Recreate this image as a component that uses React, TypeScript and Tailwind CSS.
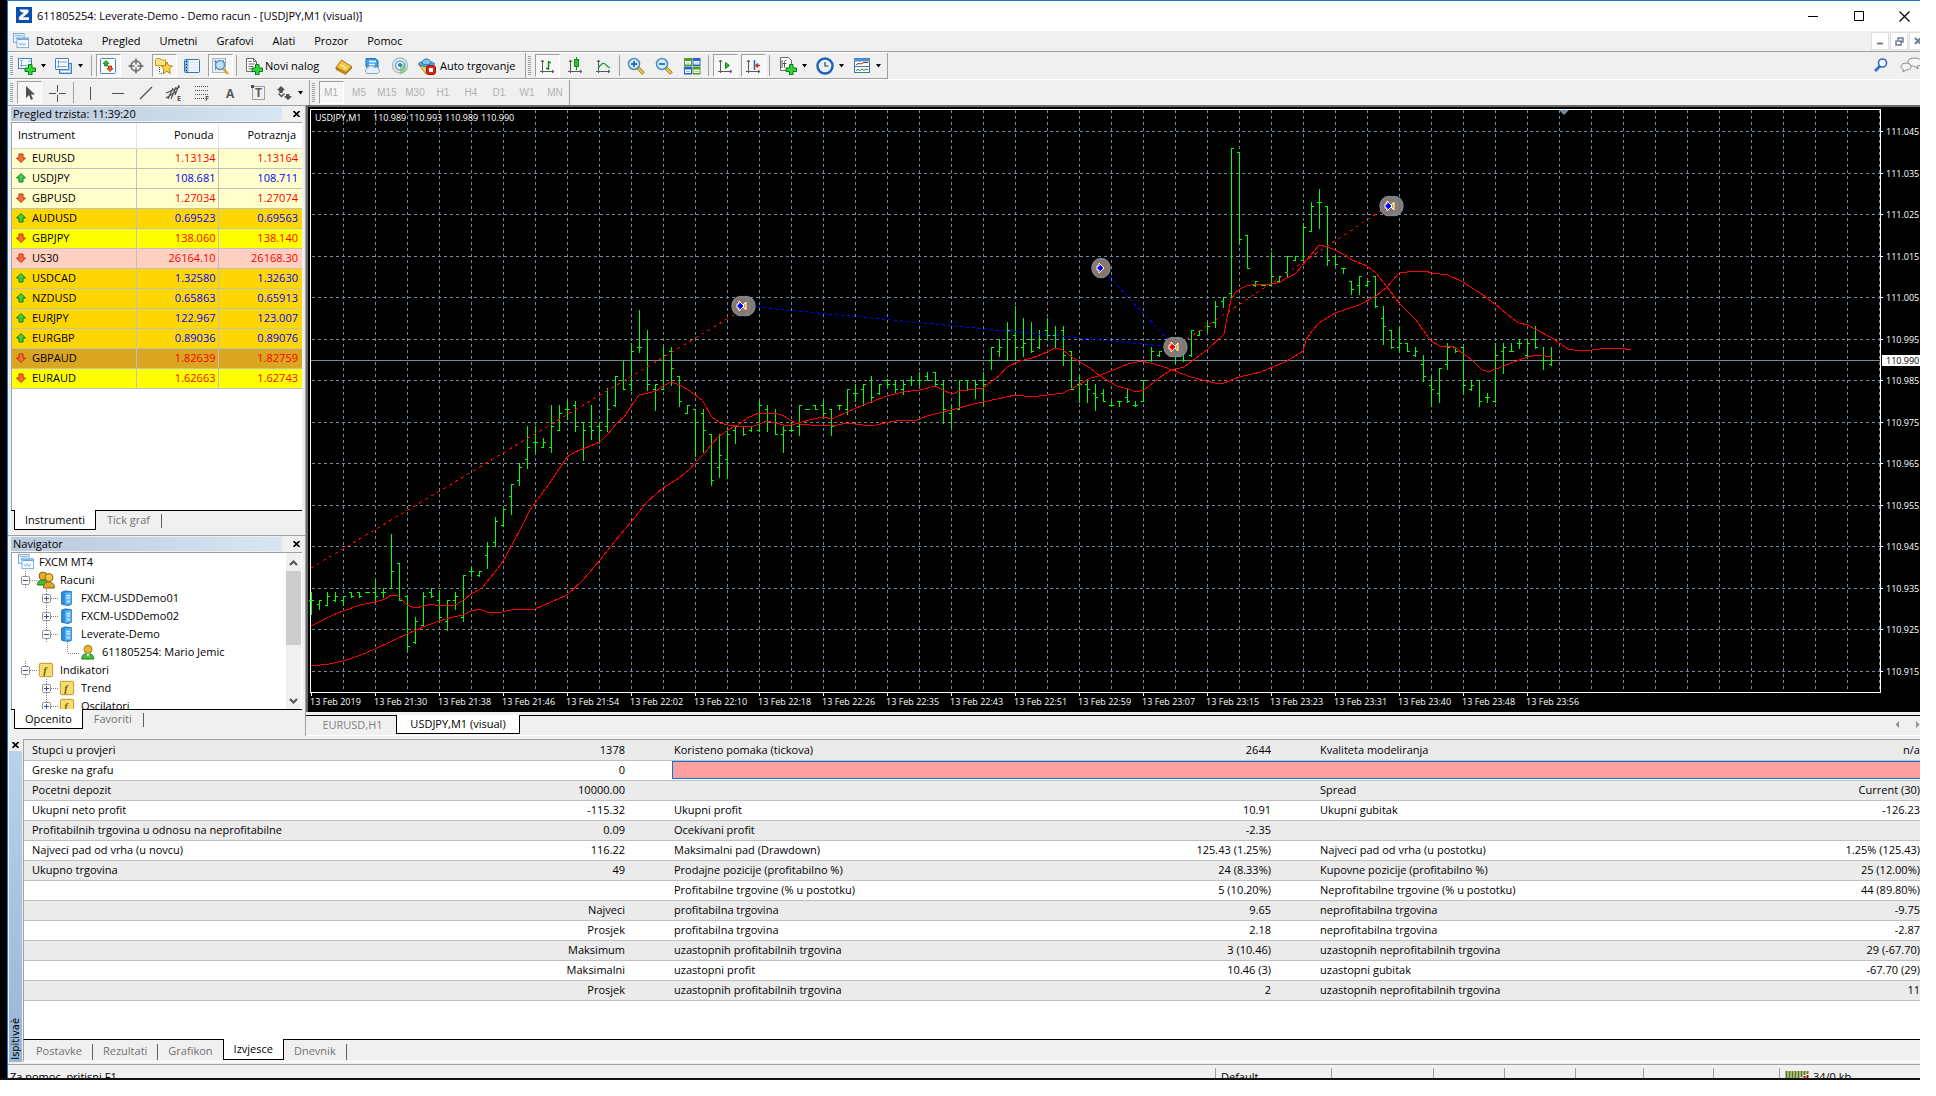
import type { ReactNode } from 'react'

// ---------- data ----------

const menuItems = ['Datoteka', 'Pregled', 'Umetni', 'Grafovi', 'Alati', 'Prozor', 'Pomoc']
const timeframes = ['M1', 'M5', 'M15', 'M30', 'H1', 'H4', 'D1', 'W1', 'MN']

type Quote = { name: string; bid: string; ask: string; up: boolean; bg: string }

const quotes: Quote[] = [
  { name: 'EURUSD', bid: '1.13134', ask: '1.13164', up: false, bg: 'bg-[#ffffcc]' },
  { name: 'USDJPY', bid: '108.681', ask: '108.711', up: true, bg: 'bg-[#ffffcc]' },
  { name: 'GBPUSD', bid: '1.27034', ask: '1.27074', up: false, bg: 'bg-[#ffffcc]' },
  { name: 'AUDUSD', bid: '0.69523', ask: '0.69563', up: true, bg: 'bg-[#ffd700]' },
  { name: 'GBPJPY', bid: '138.060', ask: '138.140', up: false, bg: 'bg-[#ffff00]' },
  { name: 'US30', bid: '26164.10', ask: '26168.30', up: false, bg: 'bg-[#ffcfc0]' },
  { name: 'USDCAD', bid: '1.32580', ask: '1.32630', up: true, bg: 'bg-[#ffd700]' },
  { name: 'NZDUSD', bid: '0.65863', ask: '0.65913', up: true, bg: 'bg-[#ffd700]' },
  { name: 'EURJPY', bid: '122.967', ask: '123.007', up: true, bg: 'bg-[#ffd700]' },
  { name: 'EURGBP', bid: '0.89036', ask: '0.89076', up: true, bg: 'bg-[#ffd700]' },
  { name: 'GBPAUD', bid: '1.82639', ask: '1.82759', up: false, bg: 'bg-[#daa520]' },
  { name: 'EURAUD', bid: '1.62663', ask: '1.62743', up: false, bg: 'bg-[#ffff00]' },
]

const report = [
  ['Stupci u provjeri', '1378', 'Koristeno pomaka (tickova)', '2644', 'Kvaliteta modeliranja', 'n/a'],
  ['Greske na grafu', '0'],
  ['Pocetni depozit', '10000.00', '', '', 'Spread', 'Current (30)'],
  ['Ukupni neto profit', '-115.32', 'Ukupni profit', '10.91', 'Ukupni gubitak', '-126.23'],
  ['Profitabilnih trgovina u odnosu na neprofitabilne', '0.09', 'Ocekivani profit', '-2.35', '', ''],
  ['Najveci pad od vrha (u novcu)', '116.22', 'Maksimalni pad (Drawdown)', '125.43 (1.25%)', 'Najveci pad od vrha (u postotku)', '1.25% (125.43)'],
  ['Ukupno trgovina', '49', 'Prodajne pozicije (profitabilno %)', '24 (8.33%)', 'Kupovne pozicije (profitabilno %)', '25 (12.00%)'],
  ['', '', 'Profitabilne trgovine (% u postotku)', '5 (10.20%)', 'Neprofitabilne trgovine (% u postotku)', '44 (89.80%)'],
  ['', 'Najveci', 'profitabilna trgovina', '9.65', 'neprofitabilna trgovina', '-9.75'],
  ['', 'Prosjek', 'profitabilna trgovina', '2.18', 'neprofitabilna trgovina', '-2.87'],
  ['', 'Maksimum', 'uzastopnih profitabilnih trgovina', '3 (10.46)', 'uzastopnih neprofitabilnih trgovina', '29 (-67.70)'],
  ['', 'Maksimalni', 'uzastopni profit', '10.46 (3)', 'uzastopni gubitak', '-67.70 (29)'],
  ['', 'Prosjek', 'uzastopnih profitabilnih trgovina', '2', 'uzastopnih neprofitabilnih trgovina', '11'],
]

// high, low, open, close in chart units, one bar every 8 units
const bars: [number, number, number, number][] = [
  [592, 614, 600, 600], [600, 609, 604, 600], [592, 605, 605, 596], [592, 601, 600, 596], [596, 605, 600, 596],
  [592, 597, 592, 596], [592, 597, 592, 596], [592, 592, 592, 592], [579, 601, 592, 596], [588, 597, 592, 592],
  [534, 588, 588, 571], [563, 600, 563, 600], [595, 651, 596, 646], [617, 643, 642, 621], [592, 625, 625, 596],
  [588, 597, 592, 596], [590, 621, 600, 617], [600, 630, 621, 600], [592, 609, 600, 596], [576, 621, 617, 575],
  [567, 576, 571, 571], [571, 576, 575, 571], [542, 568, 555, 546], [517, 546, 542, 521], [509, 526, 525, 509],
  [484, 514, 496, 484], [463, 485, 480, 467], [426, 468, 459, 447], [426, 452, 442, 442], [438, 447, 447, 442],
  [405, 452, 447, 426], [405, 430, 430, 413], [401, 419, 409, 409], [401, 431, 405, 426], [422, 460, 422, 430],
  [405, 439, 426, 430], [422, 443, 426, 430], [388, 431, 426, 409], [376, 406, 405, 376], [360, 389, 380, 389],
  [343, 390, 384, 351], [310, 352, 347, 347], [330, 390, 339, 384], [384, 410, 389, 384], [347, 389, 389, 355],
  [347, 385, 351, 368], [376, 406, 376, 401], [405, 413, 413, 405], [409, 456, 409, 422], [409, 452, 413, 430],
  [434, 485, 434, 480], [434, 477, 467, 455], [427, 478, 459, 434], [426, 443, 430, 426], [426, 435, 426, 434],
  [426, 431, 430, 426], [401, 431, 430, 405], [405, 431, 409, 413], [409, 434, 413, 434], [426, 452, 434, 430],
  [422, 431, 430, 430], [405, 435, 426, 405], [409, 409, 409, 409], [405, 409, 405, 409], [401, 418, 405, 413],
  [409, 435, 409, 426], [405, 409, 405, 405], [389, 414, 409, 389], [384, 401, 393, 393], [384, 405, 389, 384],
  [376, 402, 380, 397], [384, 394, 393, 384], [379, 387, 380, 384], [380, 393, 384, 389], [380, 394, 389, 384],
  [376, 385, 380, 380], [372, 385, 380, 380], [372, 380, 376, 380], [372, 385, 372, 384], [380, 423, 384, 409],
  [405, 427, 413, 409], [380, 409, 409, 380], [380, 389, 380, 389], [380, 398, 389, 384], [372, 405, 380, 384],
  [347, 369, 360, 347], [339, 356, 351, 347], [322, 360, 360, 330], [306, 360, 335, 347], [318, 356, 347, 343],
  [322, 352, 339, 351], [330, 348, 347, 339], [318, 339, 330, 335], [326, 348, 335, 335], [326, 365, 330, 355],
  [351, 389, 351, 389], [375, 402, 384, 384], [379, 402, 384, 389], [384, 410, 393, 397], [389, 401, 393, 401],
  [401, 406, 405, 405], [401, 406, 401, 401], [389, 402, 397, 401], [401, 406, 405, 405], [380, 401, 401, 380],
  [347, 361, 360, 351], [351, 356, 355, 351], [343, 352, 347, 351], [347, 363, 347, 351], [347, 361, 347, 360],
  [330, 356, 355, 330], [330, 335, 335, 330], [322, 331, 326, 326], [301, 327, 322, 306], [297, 307, 301, 297],
  [148, 298, 293, 148], [152, 244, 152, 239], [235, 268, 235, 268], [281, 286, 285, 281], [285, 285, 285, 285],
  [252, 285, 285, 276], [276, 282, 281, 276], [256, 277, 272, 256], [256, 260, 260, 256], [223, 260, 260, 227],
  [202, 231, 231, 206], [189, 228, 202, 202], [206, 265, 206, 260], [256, 265, 256, 264], [268, 273, 268, 268],
  [281, 294, 281, 289], [276, 294, 285, 276], [281, 286, 285, 281], [276, 307, 276, 306], [306, 344, 318, 326],
  [330, 348, 330, 347], [326, 352, 347, 343], [343, 351, 343, 351], [347, 356, 355, 351], [355, 381, 364, 376],
  [376, 406, 385, 389], [368, 402, 393, 368], [343, 369, 364, 347], [347, 352, 347, 351], [347, 394, 347, 385],
  [380, 390, 389, 385], [380, 406, 380, 401], [393, 402, 397, 397], [343, 402, 401, 355], [343, 373, 351, 347],
  [343, 351, 351, 351], [339, 348, 343, 343], [339, 356, 355, 343], [326, 348, 339, 347], [347, 369, 360, 360],
  [347, 365, 364, 360],
]

const fastMa =
  '311,626 323,620 333,615 343,611 360,605 375,602 385,599 391,595 398,596 402,600 407,605 415,608 424,606 431,604 439,606 455,605 465,599 471,594 482,588 495,572 503,561 512,545 522,526 530,510 535,503 551,481 567,457 575,452 590,446 600,442 607,435 617,423 624,417 632,405 639,395 648,393 656,391 663,386 671,382 680,385 690,391 703,401 711,416 720,423 728,425 737,426 752,427 759,424 767,421 780,424 788,426 798,423 813,419 823,417 832,419 847,412 863,405 871,402 887,396 903,392 920,390 935,386 943,390 952,394 960,391 983,388 991,382 999,376 1007,367 1020,361 1032,358 1047,352 1055,348 1063,350 1073,358 1080,362 1090,368 1100,376 1117,386 1128,389 1136,392 1144,390 1159,378 1171,370 1184,367 1192,361 1207,350 1224,334 1227,318 1231,300 1235,293 1240,289 1246,286 1256,284 1271,284 1280,282 1296,273 1306,261 1319,245 1328,247 1335,250 1345,255 1352,260 1367,266 1376,273 1387,287 1399,303 1416,320 1431,341 1440,346 1454,347 1471,359 1481,369 1488,372 1504,366 1511,363 1528,357 1537,355 1552,357'
const slowMa =
  '311,666 329,664 343,661 361,655 375,649 392,641 407,634 423,627 439,621 453,617 463,615 471,611 480,609 487,612 497,613 511,610 535,609 551,602 567,595 583,580 600,560 615,541 631,522 647,502 663,488 679,478 690,469 695,463 704,454 711,445 719,436 733,427 738,425 747,418 759,413 775,413 784,416 795,423 800,424 810,425 832,426 847,423 871,426 890,422 903,420 915,421 927,416 943,412 959,408 973,404 983,402 997,399 1015,395 1032,397 1047,395 1063,393 1079,385 1088,379 1098,376 1111,371 1128,364 1141,361 1150,363 1161,366 1175,371 1191,377 1206,381 1215,383 1224,383 1239,377 1261,372 1287,361 1303,351 1306,340 1312,331 1319,323 1335,313 1359,305 1376,296 1387,287 1399,273 1415,271 1426,271 1431,273 1448,275 1463,282 1483,295 1495,304 1513,319 1519,323 1528,325 1535,329 1552,338 1568,349 1574,350 1592,350 1609,348 1620,348 1631,350'

const gridRows = [131, 173, 214, 256, 297, 339, 380, 422, 463, 505, 546, 588, 629, 671]
const prices = ['111.045', '111.035', '111.025', '111.015', '111.005', '110.995', '110.985', '110.975', '110.965', '110.955', '110.945', '110.935', '110.925', '110.915']
const times = ['2019', '21:30', '21:38', '21:46', '21:54', '22:02', '22:10', '22:18', '22:26', '22:35', '22:43', '22:51', '22:59', '23:07', '23:15', '23:23', '23:31', '23:40', '23:48', '23:56']

// ---------- icons ----------

function Icon({ children, size = 18 }: { children: ReactNode; size?: number }) {
  return (
    <svg width={size} height={size} viewBox="0 0 18 18" fill="none" className="shrink-0" aria-hidden="true">
      {children}
    </svg>
  )
}

const plus = <path d="M10.500 7.500h3.500v3.500h3.500v3.500h-3.500v3.500h-3.500v-3.500h-3.500v-3.500h3.500z" fill="#2fd636" stroke="#0b7a14" />

const NewChartIcon = () => (
  <Icon>
    <rect x="0.500" y="1.500" width="13" height="10" fill="#f4f9ff" stroke="#3f7fbd" />
    <path d="M3.500 3v7M2 8.500h10M2.500 4l1-1 1 1M10 4h3" stroke="#7fa9d0" />
    {plus}
  </Icon>
)
const ProfilesIcon = () => (
  <Icon>
    <rect x="4.500" y="6.500" width="12" height="10" fill="#a9cbee" stroke="#3f7fbd" />
    <path d="M6 14.500h9" stroke="#fff" />
    <rect x="0.500" y="1.500" width="13" height="11" rx="0.500" fill="#f4f9ff" stroke="#3f7fbd" />
    <path d="M3.500 3v8M2 5h10M2 9.500h10" stroke="#7fa9d0" />
  </Icon>
)
const MarketIcon = () => (
  <Icon>
    <rect x="1.500" y="1.500" width="15" height="15" rx="1" fill="#fff" stroke="#4a86c5" />
    <path d="M7 3.500l3 3H8.500v2.500h-3V6.500H4z" fill="#2fb62f" stroke="#0d7d12" strokeWidth="0.800" />
    <path d="M11 14.500L8 11.500h1.500V9h3v2.500H14z" fill="#f0592a" stroke="#a32a0b" strokeWidth="0.800" />
  </Icon>
)
const CrosshairIcon = () => (
  <Icon>
    <circle cx="9" cy="9" r="5" stroke="#6a6a6a" strokeWidth="1.500" />
    <path d="M9 1.500v6M9 10.500v6M1.500 9h6M10.500 9h6" stroke="#6a6a6a" strokeWidth="1.500" />
  </Icon>
)
const FavoritesIcon = () => (
  <Icon>
    <path d="M0.500 8.500v-6l1-1h4l1 1.500h4v5.500z" fill="#fbe58a" stroke="#c99a22" />
    <path d="M4.500 10v6.500M6 16.500h3" stroke="#444" strokeDasharray="1 1" />
    <path d="M12 5l1.500 3.500 4 0.500-3 3 0.800 4.500-3.500-2.200-3.600 2.200 0.800-4.500-3-3 4.500-0.500z" fill="#ffd24a" stroke="#b9801b" />
  </Icon>
)
const TerminalIcon = () => (
  <Icon>
    <rect x="1.500" y="2.500" width="15" height="13" rx="1" fill="#f2f8fe" stroke="#2e74b5" />
    <rect x="2" y="3" width="3.500" height="12" fill="#7fb4e6" />
    <path d="M3.500 4v10" stroke="#111" strokeDasharray="1 2" />
    <path d="M7 5.500h8M7 8h8M7 10.500h8M7 13h8" stroke="#d5e4f2" />
  </Icon>
)
const TesterIcon = () => (
  <Icon>
    <rect x="1.500" y="1.500" width="13" height="14" fill="#eef2f6" stroke="#a9b4c0" />
    <path d="M4.500 3v10M12.500 3v10M3 4.500h3M11 5.500h3" stroke="#7b8fa4" />
    <circle cx="9" cy="8" r="4.500" fill="#bfe0f7" stroke="#5c94c8" strokeWidth="1.500" />
    <path d="M12.500 12l4.500 5" stroke="#d9a520" strokeWidth="2.500" />
  </Icon>
)
const OrderIcon = () => (
  <Icon>
    <path d="M1.500 1.500h7l3 3v10h-10z" fill="#fff" stroke="#6b6b6b" />
    <path d="M8.500 1.500v3h3M3.500 4.500h3M3.500 7h6M3.500 9.500h5M3.500 12h3" stroke="#6b6b6b" />
    {plus}
  </Icon>
)
const EditorIcon = () => (
  <Icon>
    <path d="M1 10.500L6.500 3l10 6.500L11 16z" fill="#f3c443" stroke="#a8741a" />
    <path d="M1 10.500v2l9.500 5 6-6v-2L11 15.500z" fill="#c98d1e" stroke="#8f5f10" strokeWidth="0.600" />
    <path d="M5.500 7.500l6 4" stroke="#fff1b8" strokeWidth="1.500" />
  </Icon>
)
const CloudServerIcon = () => (
  <Icon>
    <path d="M3 1.500h9l3 2v8H5l-2-2z" fill="#3aa0ea" stroke="#1d6fb4" />
    <path d="M6 4.500h7M6 7.500h6" stroke="#fff" strokeWidth="1.500" />
    <path d="M4 16.500a3 3 0 0 1 0.500-5.500 4 4 0 0 1 7-0.500 3 3 0 0 1 3 6z" fill="#e8f0fa" stroke="#8ba6cc" />
  </Icon>
)
const SignalIcon = () => (
  <Icon>
    <circle cx="9" cy="8.500" r="7.500" stroke="#a9bfd0" strokeWidth="1.500" />
    <circle cx="9" cy="8.500" r="4.500" stroke="#7fa3bc" strokeWidth="1.500" />
    <path d="M9 8.500v9a9 9 0 0 0 6-4V6z" fill="#7ec47c" opacity="0.700" />
    <circle cx="9" cy="8" r="2" fill="#2f7fc4" />
  </Icon>
)
const AutoTradeIcon = () => (
  <Icon>
    <path d="M1 8h15l-6 9H8z" fill="#f5cf4e" stroke="#b98a1c" />
    <ellipse cx="8.500" cy="7" rx="8" ry="2.500" fill="#5ab0e2" stroke="#2877ad" />
    <path d="M4 6.500c0-6 9-6 9 0-2 1.500-7 1.500-9 0z" fill="#7cc6f0" stroke="#2877ad" />
    <rect x="8.500" y="8.500" width="9" height="9" rx="2.500" fill="#d8281c" stroke="#a01208" />
    <rect x="11" y="11" width="4" height="4" fill="#fff" />
  </Icon>
)
const axes = <path d="M4.500 3v13M2 14.500h14M3 5l1.500-2L6 5M14 13l2 1.500-2 1.500" stroke="#5a5a5a" />
const BarChartIcon = () => (
  <Icon>
    {axes}
    <path d="M10.500 4v9M8 11.500h2.500M10.500 5.500H13" stroke="#108a18" strokeWidth="1.500" />
  </Icon>
)
const CandleIcon = () => (
  <Icon>
    {axes}
    <path d="M10.500 0v13" stroke="#108a18" />
    <rect x="8.500" y="2.500" width="4" height="7" fill="#28c832" stroke="#108a18" />
  </Icon>
)
const LineChartIcon = () => (
  <Icon>
    {axes}
    <path d="M4 12c3-6 6-7 8-4 1 1 2 2 4 3" stroke="#1f9a3a" strokeWidth="1.300" />
  </Icon>
)
const ZoomIcon = ({ add }: { add?: boolean }) => (
  <Icon>
    <path d="M11 11l5.500 5.500" stroke="#a8781a" strokeWidth="3.500" />
    <path d="M11.500 11.500l4.500 4.500" stroke="#f4cd3a" strokeWidth="2" />
    <circle cx="7" cy="7" r="5.500" fill="#d3ebfa" stroke="#4c8cc4" strokeWidth="1.500" />
    <path d={add ? 'M4 7h6M7 4v6' : 'M4 7h6'} stroke="#2a6fa8" strokeWidth="1.800" />
  </Icon>
)
const TilesIcon = () => (
  <Icon>
    <rect x="1" y="1" width="8" height="8" fill="#4da019" />
    <rect x="9.500" y="1" width="8" height="8" fill="#2a62c9" />
    <rect x="1" y="9.500" width="8" height="8" fill="#2a62c9" />
    <rect x="9.500" y="9.500" width="8" height="8" fill="#4da019" />
    <path d="M2 4h6v3.500H2zM10.500 4h6v3.500h-6zM2 12.500h6V16H2zM10.500 12.500h6V16h-6z" fill="#fff" />
    <path d="M3 6h4M11.500 6h4M3 14.500h4M11.500 14.500h4" stroke="#9cb7dd" />
  </Icon>
)
const AutoScrollIcon = () => (
  <Icon>
    {axes}
    <path d="M9.500 5.500l4 3-4 3z" fill="#28b832" stroke="#108a18" />
  </Icon>
)
const ShiftIcon = () => (
  <Icon>
    {axes}
    <path d="M10.500 3v10" stroke="#2a62a8" strokeWidth="1.500" />
    <path d="M16 8.500h-4M14 6.500l-2 2 2 2" stroke="#b83a14" strokeWidth="1.500" />
  </Icon>
)
const IndicatorsIcon = () => (
  <Icon>
    <path d="M1.500 0.500h8l3 3v10h-11z" fill="#fff" stroke="#6b6b6b" />
    <path d="M7.500 3.500c-2-0.500-2 1-2 2v5M3.500 6.500h4M3 3v8" stroke="#555" />
    {plus}
  </Icon>
)
const ClockIcon = () => (
  <Icon>
    <circle cx="9" cy="9" r="7.500" fill="#fff" stroke="#1c63b8" strokeWidth="2.500" />
    <circle cx="9" cy="9" r="5.500" fill="#e6eef6" />
    <path d="M9 5v4h3.500" stroke="#444" strokeWidth="1.200" />
  </Icon>
)
const TemplateIcon = () => (
  <Icon>
    <rect x="1.500" y="1.500" width="15" height="14" fill="#fff" stroke="#3d74b5" />
    <path d="M1 3h16" stroke="#5590d0" strokeWidth="3" />
    <path d="M2 9.500h14" stroke="#3d74b5" />
    <path d="M3 7.500l3-1 2 0.500 3-1.500h4" stroke="#a22718" />
    <path d="M3 13.500l2-1 2 1 2-1.500 2 1.500 2-1.500 2 1" stroke="#2a8a2a" />
  </Icon>
)

const toolShapes: { label: string; icon: ReactNode }[] = [
  { label: 'Okomita linija', icon: <path d="M9.500 3v13" stroke="#505050" /> },
  { label: 'Vodoravna linija', icon: <path d="M3 9.500h12" stroke="#505050" /> },
  { label: 'Trend linija', icon: <path d="M3 15L15 3" stroke="#505050" strokeWidth="1.200" /> },
  {
    label: 'Kanal',
    icon: (
      <>
        <path d="M1 9L15 3M1 14L12 7M3 15L8 4M6 15l5-12M10 11l4-10" stroke="#505050" strokeWidth="1.200" />
        <text x="12" y="17" fontSize="7" fontWeight="700" fill="#505050">E</text>
      </>
    ),
  },
  {
    label: 'Fibonacci',
    icon: (
      <>
        <path d="M2 2.500h14M2 6.500h14M2 10.500h14M2 14.500h9" stroke="#505050" strokeDasharray="1 1" />
        <text x="12" y="17" fontSize="7" fontWeight="700" fill="#505050">F</text>
      </>
    ),
  },
  { label: 'Tekst', icon: <text x="5" y="14" fontSize="12" fontWeight="700" fill="#5a5a5a">A</text> },
  {
    label: 'Oznaka',
    icon: (
      <>
        <rect x="3.500" y="2.500" width="12" height="13" stroke="#505050" strokeDasharray="1 1" />
        <rect x="2" y="1" width="3" height="3" fill="#505050" />
        <text x="6" y="13" fontSize="12" fontWeight="700" fill="#5a5a5a">T</text>
      </>
    ),
  },
]

function QuoteArrow({ up }: { up: boolean }) {
  return (
    <svg width="10" height="10" viewBox="0 0 10 10" className={up ? 'shrink-0' : 'shrink-0 rotate-180'} aria-hidden="true">
      <path d="M5 0.500L9.500 5H7v4H3V5H0.500z" fill={up ? '#3fcf4a' : '#ff6a3a'} stroke={up ? '#0a7d1c' : '#b3300c'} />
    </svg>
  )
}

const WindowsIcon = () => (
  <Icon size={16}>
    <rect x="0.500" y="0.500" width="12" height="10" fill="#eaf4ff" stroke="#6aa5dc" />
    <path d="M2 3h9M3 6h3" stroke="#6aa5dc" />
    <rect x="4.500" y="5.500" width="13" height="11" fill="#fff" stroke="#6aa5dc" />
    <path d="M5 7h12" stroke="#6aa5dc" strokeWidth="2" />
    <path d="M6.500 11l2 3 2-3 2 3 2-3" stroke="#6aa5dc" />
  </Icon>
)
const PersonIcon = () => (
  <Icon size={16}>
    <path d="M2 17c0-5 2.500-6 6.500-6s7 1 7 6z" fill="#3fbf3a" stroke="#157a16" />
    <circle cx="9" cy="6" r="4.500" fill="#e9b730" stroke="#9a6c10" />
    <path d="M7 11l2 3 2-3z" fill="#fff" />
  </Icon>
)
const PeopleIcon = () => (
  <Icon>
    <path d="M0.500 14c0-4 2-5 5-5s5 1 5 5z" fill="#3fbf3a" stroke="#157a16" />
    <circle cx="6" cy="5" r="4" fill="#e2b02a" stroke="#8a6412" />
    <path d="M6.500 17c0-5 2-6 5-6s6 1 6 6z" fill="#d8a526" stroke="#8a6412" />
    <circle cx="12" cy="6.500" r="4" fill="#f0c548" stroke="#8a6412" />
  </Icon>
)
const ServerIcon = () => (
  <Icon size={16}>
    <path d="M3 2.500L7 1l7 1v14l-4 1.500-7-1.500z" fill="#2a8fe0" stroke="#1a67a8" />
    <path d="M7 3l7-0.500v13L7 17z" fill="#5cb8f8" />
    <path d="M8.500 6.500h4M8.500 9h4" stroke="#fff" strokeWidth="1.300" />
    <rect x="9" y="12" width="3" height="2" fill="#d5efff" />
  </Icon>
)
const FunctionIcon = () => (
  <Icon size={16}>
    <rect x="1.500" y="1.500" width="15" height="15" rx="1.500" fill="#f7dc6f" stroke="#b58d1c" />
    <text x="6" y="13" fontSize="12" fontStyle="italic" fontWeight="700" fill="#7a5a08" className="font-['Liberation_Serif',serif]">f</text>
  </Icon>
)

// ---------- toolbar pieces ----------

function Grip() {
  return (
    <span className="flex w-[7px] shrink-0 items-center justify-center">
      <span className="h-5 w-[3px] bg-[repeating-linear-gradient(to_bottom,#a0a0a0_0_1px,#f0f0f0_1px_2px)]" />
    </span>
  )
}

function Divider() {
  return <span className="mx-0.5 my-0.5 w-px shrink-0 bg-[#a0a0a0]" />
}

function ToolButton({ label, pressed, children }: { label: string; pressed?: boolean; children: ReactNode }) {
  return (
    <button type="button" aria-label={label} aria-pressed={pressed} className="flex w-7 shrink-0 items-center justify-center">
      <span
        className={
          pressed
            ? 'flex h-[23px] w-[25px] items-center justify-center border border-[#a0a0a0] border-r-white border-b-white bg-[#f7f7f7]'
            : 'flex h-[23px] w-[25px] items-center justify-center'
        }
      >
        {children}
      </span>
    </button>
  )
}

function DropButton({ label, children }: { label: string; children: ReactNode }) {
  return (
    <button type="button" aria-label={label} className="flex w-[37px] shrink-0 items-center gap-1 pl-[3px]">
      {children}
      <Caret />
    </button>
  )
}

function Caret() {
  return (
    <svg width="7" height="4" viewBox="0 0 7 4" className="shrink-0" aria-hidden="true">
      <path d="M1 0h5L3.500 3.500z" fill="#000" />
    </svg>
  )
}

function PanelTitle({ title }: { title: string }) {
  return (
    <div className="flex h-4 items-center gap-2 pl-[3px] pr-[3px]">
      <h2 className="h-[14px] flex-1 bg-gradient-to-r from-[#b8c9dc] to-[#d8e6f4] pl-0.5 leading-[13px]">{title}</h2>
      <CloseButton />
    </div>
  )
}

function CloseButton() {
  return (
    <button type="button" aria-label="Zatvori" className="flex w-3 items-center justify-center">
      <svg width="7" height="6" viewBox="0 0 7 6" aria-hidden="true">
        <path d="M0.500 0l6 6M6.500 0l-6 6" stroke="#000" strokeWidth="1.600" />
      </svg>
    </button>
  )
}

function PanelTabs({ active, other }: { active: string; other: string }) {
  return (
    <div className="flex h-[23px] items-start border-t border-black pl-[3px]">
      <button type="button" className="-mt-px h-5 border border-t-0 border-black bg-white px-[10px] leading-[18px]">{active}</button>
      <button type="button" className="h-[18px] px-[11px] leading-[18px] text-[#707070]">{other}</button>
      <span className="mt-[3px] h-[14px] w-px bg-[#606060]" />
    </div>
  )
}

// ---------- sections ----------

function TitleBar() {
  return (
    <header className="flex h-[30px] items-center bg-white pl-2">
      <svg width="16" height="16" viewBox="0 0 16 16" className="mb-0.5" aria-hidden="true">
        <rect width="16" height="16" fill="#0a4fb3" />
        <path d="M3.500 2.500h7.500c2.500 0 2 2.500 0.500 4L6.500 10.500c2.500-0.500 5-0.500 6.500 0v2.500H3.500c-1.500-1.500-0.500-3 0.500-4L8 5.500C6 5.500 4 5 3.500 2.500z" fill="#fff" />
      </svg>
      <h1 className="ml-[5px] flex-1">611805254: Leverate-Demo - Demo racun - [USDJPY,M1 (visual)]</h1>
      <div className="flex">
        <button type="button" aria-label="Smanji" className="flex w-[46px] justify-center">
          <svg width="10" height="10" viewBox="0 0 10 10" aria-hidden="true"><path d="M0 5.500h10" stroke="#000" /></svg>
        </button>
        <button type="button" aria-label="Povecaj" className="flex w-[45px] justify-center">
          <svg width="10" height="10" viewBox="0 0 10 10" aria-hidden="true"><path d="M0.500 0.500h9v9h-9z" stroke="#000" fill="none" /></svg>
        </button>
        <button type="button" aria-label="Zatvori" className="flex w-[39px] justify-center pl-[7px]">
          <svg width="11" height="11" viewBox="0 0 11 11" aria-hidden="true"><path d="M0.500 0.500l10 10M10.500 0.500l-10 10" stroke="#000" strokeWidth="1.200" /></svg>
        </button>
      </div>
    </header>
  )
}

function MenuBar() {
  const box = 'flex h-[18px] w-[18px] shrink-0 items-center justify-center border border-[#e0e0e0] bg-white'
  return (
    <nav className="flex h-[21px] items-center border-b border-[#a0a0a0] pl-[5px]">
      <WindowsIcon />
      <ul className="ml-[7px] flex flex-1 gap-[19px]">
        {menuItems.map((m) => (
          <li key={m}><button type="button">{m}</button></li>
        ))}
      </ul>
      <div className="flex w-[49px] gap-px overflow-hidden">
        <button type="button" aria-label="Smanji graf" className={box}>
          <svg width="8" height="8" viewBox="0 0 8 8" aria-hidden="true"><path d="M1 6.500h6" stroke="#6d7f92" strokeWidth="2" /></svg>
        </button>
        <button type="button" aria-label="Vrati graf" className={box}>
          <svg width="9" height="9" viewBox="0 0 9 9" fill="none" aria-hidden="true"><path d="M3 3V1h5v4H6M1 4h5v4H1z" stroke="#6d7f92" strokeWidth="1.500" /></svg>
        </button>
        <button type="button" aria-label="Zatvori graf" className={box}>
          <svg width="8" height="8" viewBox="0 0 8 8" aria-hidden="true"><path d="M1 1l6 6M7 1L1 7" stroke="#6d7f92" strokeWidth="2" /></svg>
        </button>
      </div>
    </nav>
  )
}

function Toolbars() {
  return (
    <div>
      <div className="flex">
        <div className="flex h-[27px] border-b border-[#a0a0a0] border-t border-t-white">
          <Grip />
          <DropButton label="Novi graf"><NewChartIcon /></DropButton>
          <DropButton label="Profili"><ProfilesIcon /></DropButton>
          <Divider />
          <ToolButton label="Pregled trzista" pressed><MarketIcon /></ToolButton>
          <ToolButton label="Podaci"><CrosshairIcon /></ToolButton>
          <ToolButton label="Navigator" pressed><FavoritesIcon /></ToolButton>
          <ToolButton label="Terminal"><TerminalIcon /></ToolButton>
          <ToolButton label="Ispitivac strategija" pressed><TesterIcon /></ToolButton>
          <Divider />
          <button type="button" className="flex w-[91px] shrink-0 items-center gap-0.5 pl-[6px] whitespace-nowrap"><OrderIcon />Novi nalog</button>
          <ToolButton label="Urednik"><EditorIcon /></ToolButton>
          <ToolButton label="VPS"><CloudServerIcon /></ToolButton>
          <ToolButton label="Signali"><SignalIcon /></ToolButton>
          <button type="button" className="flex w-[112px] shrink-0 items-center gap-1 border-r border-[#a0a0a0] pl-1 whitespace-nowrap"><AutoTradeIcon />Auto trgovanje</button>
          <Grip />
          <ToolButton label="Stupci" pressed><BarChartIcon /></ToolButton>
          <ToolButton label="Svijece"><CandleIcon /></ToolButton>
          <ToolButton label="Linija"><LineChartIcon /></ToolButton>
          <Divider />
          <ToolButton label="Uvecaj"><ZoomIcon add /></ToolButton>
          <ToolButton label="Umanji"><ZoomIcon /></ToolButton>
          <ToolButton label="Rasporedi"><TilesIcon /></ToolButton>
          <Divider />
          <ToolButton label="Automatski pomak" pressed><AutoScrollIcon /></ToolButton>
          <ToolButton label="Razmak grafa" pressed><ShiftIcon /></ToolButton>
          <Divider />
          <span className="w-1" />
          <DropButton label="Indikatori"><IndicatorsIcon /></DropButton>
          <DropButton label="Periodi"><ClockIcon /></DropButton>
          <DropButton label="Predlosci"><TemplateIcon /></DropButton>
          <span className="w-px bg-[#a0a0a0]" />
        </div>
        <div className="flex flex-1 justify-end gap-3 overflow-hidden pt-[5px]">
          <button type="button" aria-label="Trazi" className="h-4 shrink-0">
            <svg width="14" height="14" viewBox="0 0 14 14" fill="none" aria-hidden="true">
              <path d="M6 8L1 13" stroke="#3a6fd0" strokeWidth="3" />
              <circle cx="8.500" cy="5" r="4" fill="#fff" stroke="#2f66cc" strokeWidth="1.600" />
            </svg>
          </button>
          <button type="button" aria-label="Poruke" className="h-4 shrink-0">
            <svg width="20" height="16" viewBox="0 0 20 16" fill="#f4f4f6" stroke="#8a8a90" aria-hidden="true">
              <path d="M8 4c0-4 14-4 14 1 0 3-3 4-5 4l1 3-4-3c-4 0-6-2-6-5z" />
              <path d="M1 9.500c0-4.500 10-4.500 10 0 0 3-3 3.500-5 3.500l-3 2 0.500-2.500C2 12 1 11 1 9.500z" />
            </svg>
          </button>
        </div>
      </div>
      <div className="flex h-[26px] border-t border-white">
        <Grip />
        <ToolButton label="Pokazivac" pressed>
          <Icon><path d="M6 2v12l3-3 2 5 2-1-2-4.500h4z" fill="#505050" /></Icon>
        </ToolButton>
        <ToolButton label="Kriz">
          <Icon><path d="M9.500 1v7M9.500 11v7M1 9.500h7M11 9.500h7" stroke="#505050" /></Icon>
        </ToolButton>
        <Divider />
        {toolShapes.map((t) => (
          <ToolButton key={t.label} label={t.label}><Icon>{t.icon}</Icon></ToolButton>
        ))}
        <DropButton label="Strelice">
          <Icon>
            <path d="M6 2l4 4-2 0.500-0.500 2.500h-3L4 6.500 2 6zM13 16l-4-3.500 2-0.500V10h3.500v2l2.500 0.500z" fill="#505050" />
            <path d="M3.500 9.500l3 3 3-3" stroke="#505050" strokeWidth="1.500" />
          </Icon>
        </DropButton>
        <span className="w-px bg-[#a0a0a0]" />
        <Grip />
        {timeframes.map((t, i) => (
          <ToolButton key={t} label={t} pressed={i === 0}>
            <span className="text-[10px] text-[#b0b0b0] font-['Liberation_Sans',sans-serif]">{t}</span>
          </ToolButton>
        ))}
        <span className="w-px bg-[#a0a0a0]" />
      </div>
    </div>
  )
}

function MarketWatch() {
  return (
    <section className="border-b border-[#a0a0a0] pb-0.5">
      <PanelTitle title="Pregled trzista: 11:39:20" />
      <div className="mx-[3px]">
        <div className="h-[388px] border-l border-t border-[#a0a0a0] bg-white">
          <table className="w-full table-fixed border-collapse">
            <colgroup>
              <col />
              <col className="w-[82px]" />
              <col className="w-[84px]" />
            </colgroup>
            <thead>
              <tr className="h-[25px] border-b border-[#d8d8d8]">
                <th className="border-r border-[#e5e5e5] p-0 pl-[6px] text-left font-normal">Instrument</th>
                <th className="border-r border-[#e5e5e5] p-0 pr-1 text-right font-normal">Ponuda</th>
                <th className="p-0 pr-[6px] text-right font-normal">Potraznja</th>
              </tr>
            </thead>
            <tbody>
              {quotes.map((q) => (
                <tr key={q.name} className={`h-5 border-b border-[#c0c0c0] ${q.bg}`}>
                  <td className="border-r border-[#c0c0c0] p-0 pl-1">
                    <span className="flex items-center gap-[6px] leading-[18px]"><QuoteArrow up={q.up} />{q.name}</span>
                  </td>
                  <td className={`border-r border-[#c0c0c0] p-0 pr-0.5 text-right leading-[18px] ${q.up ? 'text-[#0000ff]' : 'text-[#ff0000]'}`}>{q.bid}</td>
                  <td className={`p-0 pr-1 text-right leading-[18px] ${q.up ? 'text-[#0000ff]' : 'text-[#ff0000]'}`}>{q.ask}</td>
                </tr>
              ))}
            </tbody>
          </table>
        </div>
        <PanelTabs active="Instrumenti" other="Tick graf" />
      </div>
    </section>
  )
}

function Expander({ open }: { open?: boolean }) {
  return (
    <svg width="16" height="18" viewBox="0 0 16 18" className="shrink-0" aria-hidden="true">
      <path d="M4.500 0v18M9 9.500h7" stroke="#808080" strokeDasharray="1 1" />
      <rect x="0.500" y="5.500" width="8" height="8" rx="1" fill="#fff" stroke="#919191" />
      <path d={open ? 'M2 9.500h5' : 'M2 9.500h5M4.500 7v5'} stroke="#3a4fa0" />
    </svg>
  )
}

function TreeRow({ pad, open, leaf, icon, label }: { pad: string; open?: boolean; leaf?: boolean; icon: ReactNode; label: string }) {
  return (
    <li className={`flex h-[18px] items-center ${pad}`}>
      {leaf ? (
        <svg width="16" height="18" viewBox="0 0 16 18" className="shrink-0" aria-hidden="true">
          <path d="M4.500 0v10M5 10.500h11" stroke="#808080" strokeDasharray="1 1" />
        </svg>
      ) : (
        <Expander open={open} />
      )}
      <span className="flex w-[18px] shrink-0 justify-center">{icon}</span>
      <span className="ml-[5px] whitespace-nowrap">{label}</span>
    </li>
  )
}

function Navigator() {
  return (
    <section>
      <PanelTitle title="Navigator" />
      <div className="mx-[3px]">
        <div className="flex h-[157px] overflow-hidden border-l border-t border-[#a0a0a0] bg-white">
          <ul className="flex-1">
            <li className="flex h-[18px] items-center gap-[5px] pl-[6px]"><WindowsIcon />FXCM MT4</li>
            <TreeRow pad="pl-[9px]" open icon={<PeopleIcon />} label="Racuni" />
            <TreeRow pad="pl-[30px]" icon={<ServerIcon />} label="FXCM-USDDemo01" />
            <TreeRow pad="pl-[30px]" icon={<ServerIcon />} label="FXCM-USDDemo02" />
            <TreeRow pad="pl-[30px]" open icon={<ServerIcon />} label="Leverate-Demo" />
            <TreeRow pad="pl-[51px]" leaf icon={<PersonIcon />} label="611805254: Mario Jemic" />
            <TreeRow pad="pl-[9px]" open icon={<FunctionIcon />} label="Indikatori" />
            <TreeRow pad="pl-[30px]" icon={<FunctionIcon />} label="Trend" />
            <TreeRow pad="pl-[30px]" icon={<FunctionIcon />} label="Oscilatori" />
          </ul>
          <div className="mr-px flex w-[15px] flex-col items-center bg-[#f0f0f0]">
            <svg width="9" height="18" viewBox="0 0 9 18" fill="none" aria-hidden="true"><path d="M1 12l3.500-3.500L8 12" stroke="#505050" strokeWidth="2" /></svg>
            <span className="h-[74px] w-full bg-[#cdcdcd]" />
            <span className="flex-1" />
            <svg width="9" height="17" viewBox="0 0 9 17" fill="none" aria-hidden="true"><path d="M1 7l3.500 3.500L8 7" stroke="#505050" strokeWidth="2" /></svg>
          </div>
        </div>
        <PanelTabs active="Opcenito" other="Favoriti" />
      </div>
    </section>
  )
}

function Marker({ x, y, double, color = '#0000ff' }: { x: number; y: number; double?: boolean; color?: string }) {
  return (
    <g>
      {double && <ellipse cx={x + 5} cy={y} rx="9" ry="9.500" fill="#8b7768" stroke="#778899" strokeWidth="1.500" />}
      <ellipse cx={x} cy={y} rx="9" ry="9.500" fill="#8b7768" stroke="#778899" strokeWidth="1.500" />
      {double && <path d={`M${x + 5} ${y - 4}v8l-4-4z`} fill="#e0a020" stroke="#fff" />}
      <path d={`M${x - 4} ${y - 2}h2v-3l5 5-5 5v-3h-2z`} fill={color} stroke="#fff" />
    </g>
  )
}

function Chart() {
  const columns = Array.from({ length: 49 }, (_, i) => 343 + i * 32)
  return (
    <svg viewBox="308 107 1612 605" className="block w-full bg-black font-['Open_Sans',sans-serif]" fontSize="9" role="img" aria-label="USDJPY,M1">
      <g shapeRendering="crispEdges" fill="none">
        <g stroke="#778899" strokeDasharray="3 3">
          {columns.map((x) => <path key={x} d={`M${x}.5 110V692`} />)}
          {gridRows.map((y) => <path key={y} d={`M312 ${y}.5H1880`} />)}
        </g>
        <path d="M311 360.500H1880" stroke="#778899" />
        <path d="M310.500 692V109.500H1880.500V692.500H310" stroke="#fff" />
        <g stroke="#fff">
          {gridRows.map((y) => <path key={y} d={`M1881 ${y}.5h2`} />)}
          {times.map((t, i) => <path key={t} d={`M${311 + i * 64}.5 693v3`} />)}
        </g>
        <path d={bars.map(([h, l, o, c], i) => {
          const x = 311 + i * 8
          return `M${x}.5 ${h}V${l + 1}M${x - 2} ${o}.5h3M${x} ${c}.5h3`
        }).join('')} stroke="#00ff00" />
        <polyline points={fastMa} stroke="#ff0000" />
        <polyline points={slowMa} stroke="#ff0000" />
        <path d="M311 568L749 306M1175 347L1388 206" stroke="#ff0000" strokeDasharray="3 4" />
        <path d="M745 306L1174 347M1101 268L1173 345" stroke="#0000ff" strokeDasharray="3 3" />
      </g>
      <path d="M1559 110h10l-5 5z" fill="#778899" />
      <Marker x={741} y={306} double />
      <Marker x={1101} y={268} />
      <Marker x={1173} y={347} double color="#ff0000" />
      <Marker x={1389} y={206} double />
      <g fill="#fff">
        <text x="315" y="121">USDJPY,M1</text>
        {['110.989', '110.993', '110.989', '110.990'].map((p, i) => <text key={i} x={373 + i * 36} y="121">{p}</text>)}
        {prices.map((p, i) => <text key={p} x="1886" y={gridRows[i] + 4}>{p}</text>)}
        {times.map((t, i) => <text key={t} x={310 + i * 64} y="705">13 Feb {t}</text>)}
      </g>
      <rect x="1882" y="355" width="38" height="11" fill="#fff" />
      <text x="1886" y="364" fill="#000">110.990</text>
    </svg>
  )
}

function ChartTabs() {
  return (
    <div className="flex h-6 items-start border-b border-white bg-[#f0f0f0] pt-[3px]">
      <div className="flex h-[19px] flex-1 items-start border-t border-black">
        <button type="button" className="h-[18px] w-[90px] pl-[3px] leading-[18px] text-[#808080]">EURUSD,H1</button>
        <button type="button" className="-mt-px h-[19px] w-[124px] border border-t-0 border-black bg-white leading-[18px]">USDJPY,M1 (visual)</button>
        <div className="ml-auto flex gap-3 overflow-hidden pt-[5px]">
          <svg width="7" height="7" viewBox="0 0 7 7" aria-hidden="true"><path d="M5 0v7L1.500 3.500z" fill="#909090" /></svg>
          <svg width="7" height="7" viewBox="0 0 7 7" aria-hidden="true"><path d="M3 0v7l3.500-3.500z" fill="#909090" /></svg>
        </div>
      </div>
    </div>
  )
}

function Tester() {
  const tab = 'h-[22px] px-[10px] leading-5 text-[#707070]'
  const sep = 'mt-1 h-4 w-px bg-[#606060]'
  return (
    <section className="mt-[3px] flex">
      <div className="flex w-[15px] flex-col items-center">
        <div className="flex h-3 items-center"><CloseButton /></div>
        <div className="flex w-[13px] flex-1 bg-gradient-to-b from-[#b9d1ea] to-[#9ab5d5] pb-0.5 [writing-mode:sideways-lr] font-['DejaVu_Sans_Condensed','DejaVu_Sans',sans-serif] text-[11px] leading-[13px]">Ispitivaè</div>
      </div>
      <div className="min-w-0 flex-1">
        <div className="h-[300px] border-l border-t border-[#a0a0a0] bg-white">
          <table className="w-full table-fixed border-collapse whitespace-nowrap">
            <colgroup>
              <col className="w-[348px]" />
              <col className="w-[300px]" />
              <col className="w-[300px]" />
              <col className="w-[346px]" />
              <col className="w-[300px]" />
              <col />
            </colgroup>
            <tbody>
              {report.map((row, i) => (
                <tr key={i} className="h-5 border-b border-[#c0c0c0] leading-[18px] odd:bg-[#ebebeb]">
                  <td className="p-0 pl-2">{row[0]}</td>
                  <td className="p-0 pr-[47px] text-right">{row[1]}</td>
                  {row.length === 2 ? (
                    <td colSpan={4} className="p-0">
                      <div className="h-[18px] border border-r-0 border-[#0078d7] bg-[#ffa0a0]" />
                    </td>
                  ) : (
                    <>
                      <td className="p-0 pl-0.5">{row[2]}</td>
                      <td className="p-0 pr-[47px] text-right">{row[3]}</td>
                      <td className="p-0 pl-0.5">{row[4]}</td>
                      <td className="p-0 text-right">{row[5]}</td>
                    </>
                  )}
                </tr>
              ))}
            </tbody>
          </table>
        </div>
        <div className="flex h-[23px] items-start border-b border-l border-t border-b-white border-l-[#a0a0a0] border-t-black pl-0.5">
          <button type="button" className={tab}>Postavke</button>
          <span className={sep} />
          <button type="button" className={tab}>Rezultati</button>
          <span className={sep} />
          <button type="button" className={tab}>Grafikon</button>
          <button type="button" className="-mt-px h-[21px] border border-t-0 border-black bg-white px-[10px] leading-5">Izvjesce</button>
          <button type="button" className={tab}>Dnevnik</button>
          <span className={sep} />
        </div>
      </div>
    </section>
  )
}

function StatusBar() {
  const cell = 'mt-[3px] shrink-0 border-l border-[#a0a0a0]'
  return (
    <footer className="mt-0.5 flex h-[14px] overflow-hidden border-t border-[#a0a0a0]">
      <p className="flex-1 pl-0.5 pt-1 whitespace-nowrap">Za pomoc, pritisni F1</p>
      <div className={`${cell} w-[116px] pl-[5px] pt-px`}>Default</div>
      <div className={`${cell} w-[102px]`} />
      <div className={`${cell} w-[71px]`} />
      <div className={`${cell} w-[71px]`} />
      <div className={`${cell} w-[68px]`} />
      <div className={`${cell} w-[70px]`} />
      <div className={`${cell} w-[66px]`} />
      <div className={`${cell} flex w-[141px] gap-1 pl-[5px] pt-px`}>
        <svg width="24" height="16" viewBox="0 0 24 16" className="mt-0.5 shrink-0" aria-hidden="true">
          <path d="M1.500 0v16M4.500 0v16M7.500 0v16M10.500 0v8M13.500 0v7M16.500 0v6M19.500 0v4M22.500 0v3" stroke="#5a7a10" strokeWidth="2" />
          <path d="M13.500 8v8M16.500 7v9M19.500 5v11M22.500 4v12" stroke="#a01818" strokeWidth="2" />
        </svg>
        34/0 kb
      </div>
    </footer>
  )
}

export default function App() {
  return (
    <div className="min-h-screen bg-white pb-4 pr-4">
      <div className="border-b-2 border-[#111] bg-black pl-[7px] font-['Open_Sans','Noto_Sans',sans-serif] text-[11px] leading-4 text-black">
        <div className="overflow-hidden border-l border-t border-[#1979ca] bg-[#f0f0f0]">
          <TitleBar />
          <MenuBar />
          <Toolbars />
          <main>
            <div className="flex">
              <aside className="w-[298px] shrink-0 border-r border-t border-[#a0a0a0]">
                <MarketWatch />
                <Navigator />
              </aside>
              <div className="min-w-0 flex-1">
                <div className="border-l-2 border-t-2 border-[#696969]">
                  <Chart />
                </div>
                <ChartTabs />
              </div>
            </div>
            <Tester />
          </main>
          <StatusBar />
        </div>
      </div>
    </div>
  )
}
